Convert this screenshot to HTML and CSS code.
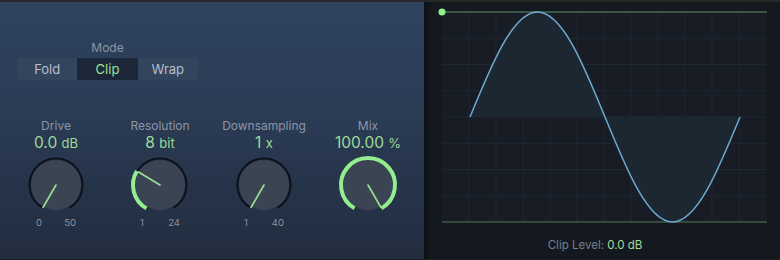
FILE: index.html
```html
<!DOCTYPE html>
<html lang="en">
<head>
<meta charset="utf-8">
<title>Bitcrusher</title>
<link rel="stylesheet" href="styles.css">
</head>
<body>
<div class="top-bar"></div>
<div class="main">
  <section class="controls">
    <div class="mode">
      <div class="mode-label">Mode</div>
      <div class="segmented">
        <div class="seg">Fold</div>
        <div class="seg seg-active">Clip</div>
        <div class="seg">Wrap</div>
      </div>
    </div>
    <div class="knobs">
      <div class="knob-col">
        <div class="k-label">Drive</div>
        <div class="k-value">0.0 <span class="unit">dB</span></div>
        <svg class="knob" width="64" height="64" viewBox="0 0 64 64">
          <path class="track" d="M 18.75 54.95 A 26.5 26.5 0 1 1 45.25 54.95"/>
          <circle class="body" cx="32" cy="32" r="25"/>
          <line class="pointer" x1="32" y1="32" x2="19" y2="54.5"/>
        </svg>
        <div class="ticks"><span>0</span><span>50</span></div>
      </div>
      <div class="knob-col">
        <div class="k-label">Resolution</div>
        <div class="k-value">8 <span class="unit">bit</span></div>
        <svg class="knob" width="64" height="64" viewBox="0 0 64 64">
          <path class="track" d="M 18.75 54.95 A 26.5 26.5 0 1 1 45.25 54.95"/>
          <circle class="body" cx="32" cy="32" r="25"/>
          <path class="arc" d="M 18.5 55.38 A 27 27 0 0 1 8.94 17.96"/>
          <line class="pointer" x1="32" y1="32" x2="10.5" y2="19"/>
        </svg>
        <div class="ticks"><span>1</span><span>24</span></div>
      </div>
      <div class="knob-col">
        <div class="k-label">Downsampling</div>
        <div class="k-value">1 <span class="unit">x</span></div>
        <svg class="knob" width="64" height="64" viewBox="0 0 64 64">
          <path class="track" d="M 18.75 54.95 A 26.5 26.5 0 1 1 45.25 54.95"/>
          <circle class="body" cx="32" cy="32" r="25"/>
          <line class="pointer" x1="32" y1="32" x2="19" y2="54.5"/>
        </svg>
        <div class="ticks"><span>1</span><span>40</span></div>
      </div>
      <div class="knob-col">
        <div class="k-label">Mix</div>
        <div class="k-value">100.00 <span class="unit">%</span></div>
        <svg class="knob" width="64" height="64" viewBox="0 0 64 64">
          <circle class="body" cx="32" cy="32" r="25"/>
          <path class="arc" d="M 18.5 55.38 A 27 27 0 1 1 45.5 55.38"/>
          <line class="pointer" x1="32" y1="32" x2="45" y2="54.5"/>
        </svg>
        <div class="ticks"></div>
      </div>
    </div>
  </section>
  <section class="display">
    <svg class="graph" width="356" height="232" viewBox="0 0 356 232">
      <rect class="plot-bg" x="18" y="10" width="325" height="210"/>
      <g class="grid">
        <line x1="45" y1="10" x2="45" y2="220"/>
        <line x1="72" y1="10" x2="72" y2="220"/>
        <line x1="99" y1="10" x2="99" y2="220"/>
        <line x1="126" y1="10" x2="126" y2="220"/>
        <line x1="153" y1="10" x2="153" y2="220"/>
        <line x1="180" y1="10" x2="180" y2="220"/>
        <line x1="207" y1="10" x2="207" y2="220"/>
        <line x1="234" y1="10" x2="234" y2="220"/>
        <line x1="261" y1="10" x2="261" y2="220"/>
        <line x1="288" y1="10" x2="288" y2="220"/>
        <line x1="315" y1="10" x2="315" y2="220"/>
        <line x1="18" y1="36.25" x2="343" y2="36.25"/>
        <line x1="18" y1="62.5" x2="343" y2="62.5"/>
        <line x1="18" y1="88.75" x2="343" y2="88.75"/>
        <line x1="18" y1="115" x2="343" y2="115"/>
        <line x1="18" y1="141.25" x2="343" y2="141.25"/>
        <line x1="18" y1="167.5" x2="343" y2="167.5"/>
        <line x1="18" y1="193.75" x2="343" y2="193.75"/>
      </g>
      <path class="wave-fill" d="M 46 115 C 68.01 61.21 89.07 10 113.5 10 C 137.93 10 158.99 61.21 181 115 C 203.01 168.79 224.07 220 248.5 220 C 272.93 220 293.99 168.79 316 115 Z"/>
      <line class="clip-top" x1="18" y1="10" x2="343" y2="10"/>
      <line class="clip-bottom" x1="18" y1="220" x2="343" y2="220"/>
      <path class="wave" d="M 46 115 C 68.01 61.21 89.07 10 113.5 10 C 137.93 10 158.99 61.21 181 115 C 203.01 168.79 224.07 220 248.5 220 C 272.93 220 293.99 168.79 316 115"/>
      <circle class="handle" cx="18" cy="10" r="3.5"/>
    </svg>
    <div class="clip-level">Clip Level: <span class="clip-value">0.0 dB</span></div>
  </section>
</div>
<div class="bottom-bar"></div>
</body>
</html>
```

FILE: styles.css
```css
* { box-sizing: border-box; }

html, body {
  margin: 0;
  padding: 0;
  width: 780px;
  height: 260px;
  overflow: hidden;
  background: #1a1d22;
  font-family: "Inter", "Liberation Sans", sans-serif;
}

.top-bar {
  height: 2px;
  background: #282828;
}

.bottom-bar {
  height: 1px;
  background: #1b1f26;
}

.main {
  display: flex;
  height: 257px;
}

.controls {
  width: 424px;
  background: linear-gradient(to bottom, #2f435f 0%, #2a3b54 45%, #222d3f 100%);
  padding-top: 39px;
  display: flex;
  flex-direction: column;
}

.mode {
  margin-left: 17px;
  width: 181px;
  display: flex;
  flex-direction: column;
  align-items: center;
}

.mode-label {
  font-size: 12px;
  line-height: 14px;
  color: #8a96a7;
}

.segmented {
  margin-top: 3px;
  width: 181px;
  height: 22px;
  display: flex;
  background: #33455d;
  border-radius: 3px;
  overflow: hidden;
}

.seg {
  flex: 1;
  display: flex;
  align-items: center;
  justify-content: center;
  font-size: 13px;
  color: #b6bfcc;
}

.seg-active {
  background: #1c283a;
  color: #9be196;
}

.knobs {
  margin-top: 38px;
  padding-left: 4px;
  display: grid;
  grid-template-columns: repeat(4, 104px);
}

.knob-col {
  display: flex;
  flex-direction: column;
  align-items: center;
}

.k-label {
  font-size: 12px;
  line-height: 14px;
  margin-top: 1px;
  color: #8b96a5;
}

.k-value {
  margin-top: 0;
  font-size: 15.5px;
  line-height: 19px;
  color: #9ddb98;
  white-space: nowrap;
}

.unit {
  font-size: 13px;
}

.knob {
  display: block;
}

.knob .track {
  fill: none;
  stroke: #0d1118;
  stroke-width: 2;
}

.knob .body {
  fill: #3a4453;
}

.knob .arc {
  fill: none;
  stroke: #94ee8f;
  stroke-width: 4;
}

.knob .pointer {
  stroke: #9be396;
  stroke-width: 1.6;
  stroke-linecap: round;
}

.ticks {
  width: 40px;
  height: 12px;
  display: flex;
  justify-content: space-between;
  font-size: 9.5px;
  line-height: 12px;
  color: #8893a1;
}

.display {
  width: 356px;
  background: #141920;
  box-shadow: inset 8px 0 6px -4px rgba(0, 0, 0, 0.35);
  display: flex;
  flex-direction: column;
}

.graph {
  display: block;
}

.plot-bg {
  fill: #171c25;
}

.grid line {
  stroke: #1f2731;
  stroke-width: 1;
}

.wave-fill {
  fill: #1d2731;
}

.wave {
  fill: none;
  stroke: #6ea9d2;
  stroke-width: 1.5;
}

.clip-top {
  stroke: #4a6a57;
  stroke-width: 1.5;
}

.clip-bottom {
  stroke: #4d7b55;
  stroke-width: 1.2;
}

.handle {
  fill: #8ef08b;
}

.clip-level {
  margin-top: 3px;
  padding-right: 14px;
  text-align: center;
  font-size: 11.5px;
  line-height: 16px;
  color: #747f8b;
}

.clip-value {
  color: #a2dc9c;
}
```
